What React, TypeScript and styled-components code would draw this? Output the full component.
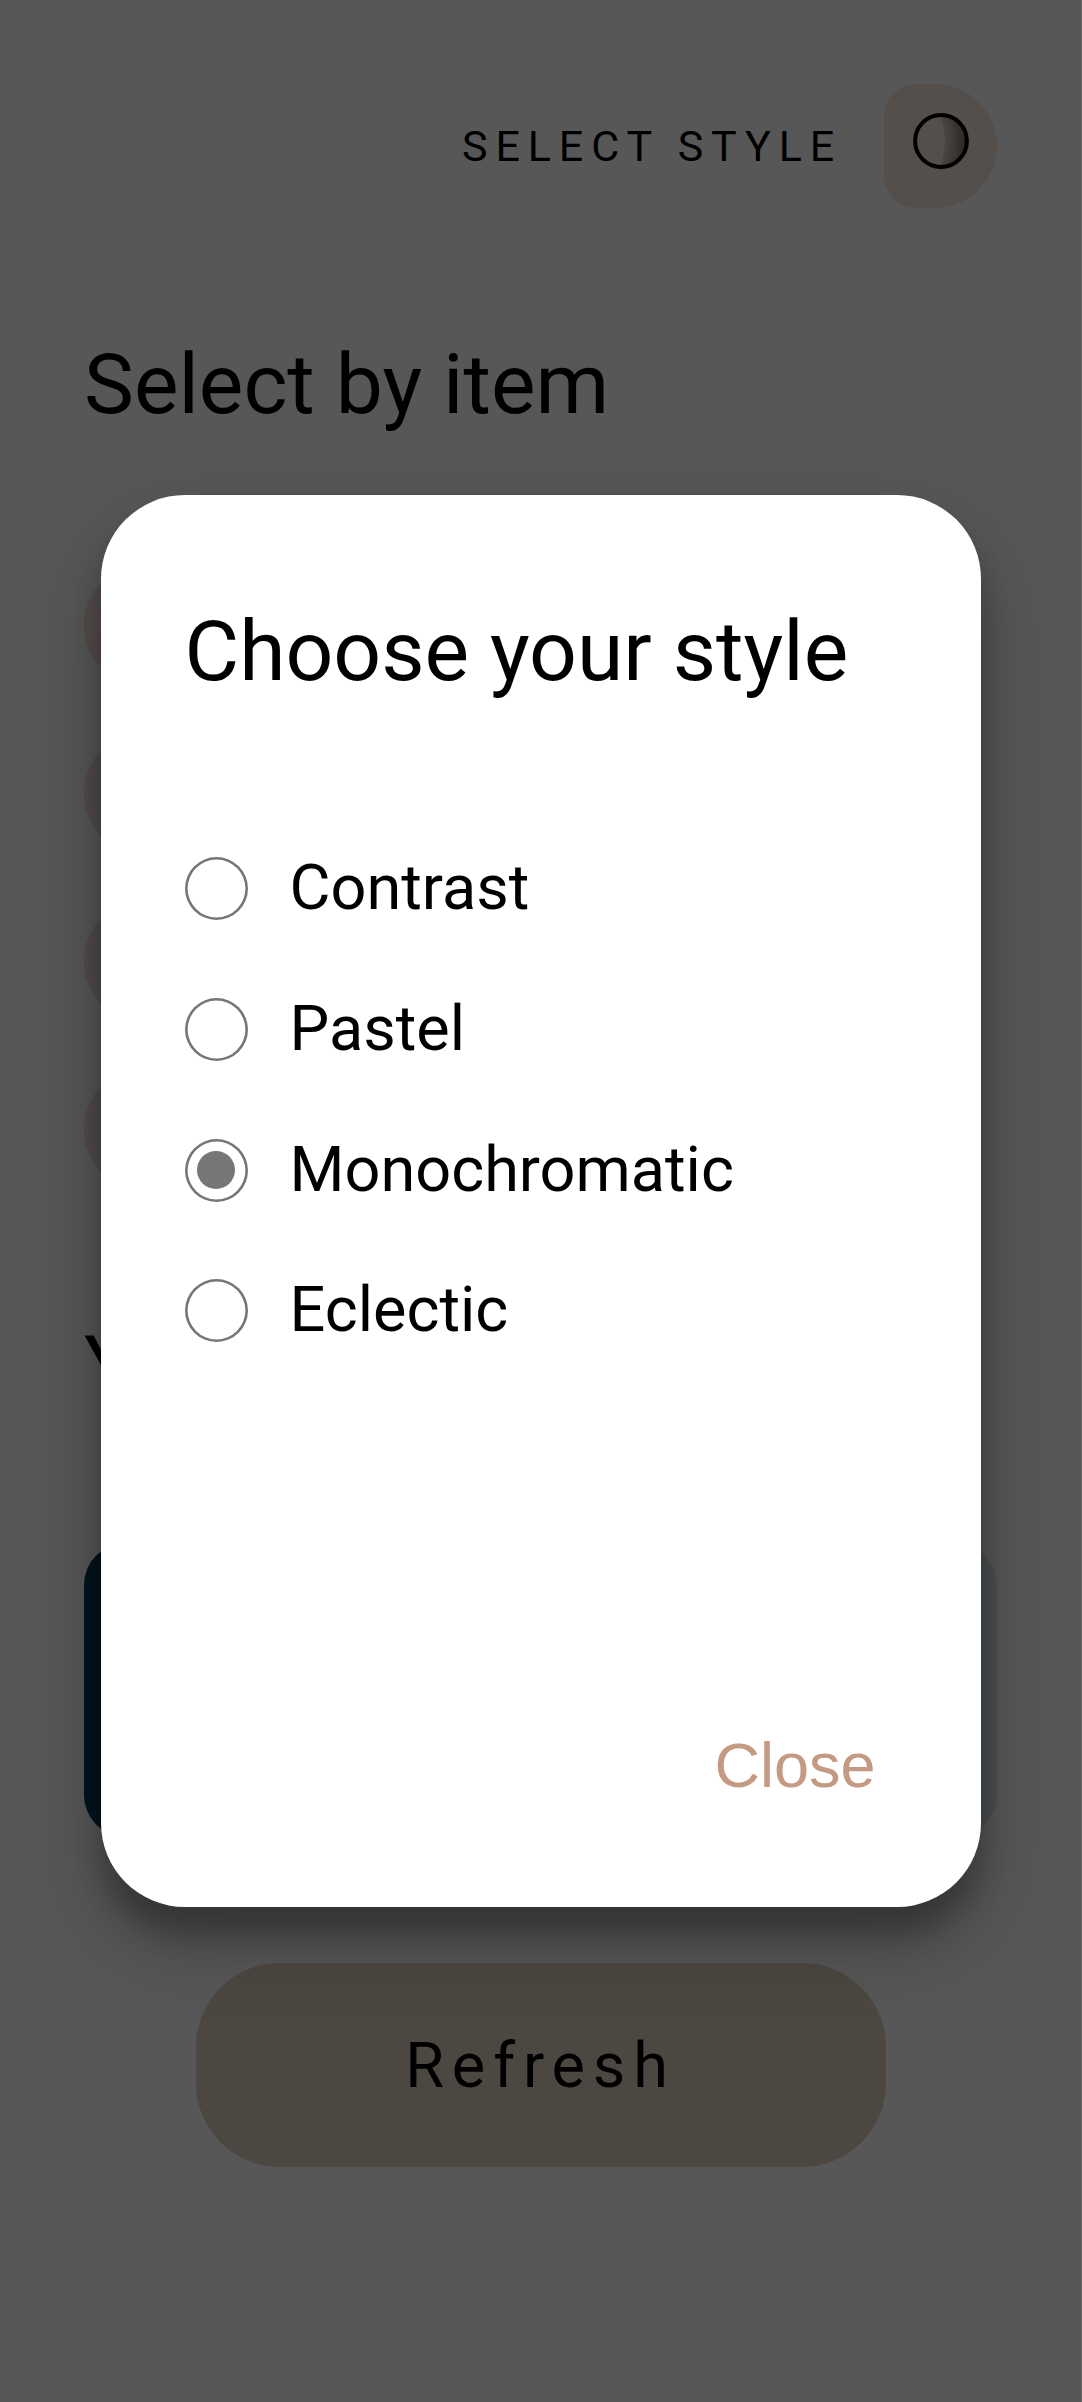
import React, { useState } from "react";
import styled, { createGlobalStyle } from "styled-components";

const GlobalStyle = createGlobalStyle`
  *, *::before, *::after { box-sizing: border-box; }
  html { background: #6b6b6b; }
  body { margin: 0; overflow: hidden; }
`;

const Screen = styled.div`
  position: relative;
  width: 1081px;
  height: 2402px;
  overflow: hidden;
  background: #575757;
  color: #000;
  font-family: Roboto, "Liberation Sans", sans-serif;
`;

const Page = styled.main`
  display: flex;
  flex-direction: column;
  padding: 83.7px 84px 0;
`;

const Header = styled.header`
  display: flex;
  justify-content: flex-end;
  align-items: center;
  gap: 42px;
  height: 124px;
`;

const HeaderLabel = styled.span`
  font-size: 43px;
  line-height: 50px;
  letter-spacing: 7.875px;
  padding-top: 1px;
`;

const StyleButton = styled.button`
  width: 113px;
  height: 124px;
  padding: 0 0 10px;
  border: 0;
  border-radius: 31.5px 62px 62px 31.5px;
  background: #544f4b;
  display: flex;
  align-items: center;
  justify-content: center;
`;

const Heading = styled.h1<{ $top: number }>`
  margin: ${(p) => p.$top}px 0 0;
  font-size: 84px;
  line-height: 100px;
  font-weight: 400;
`;

const ChipList = styled.div`
  display: flex;
  flex-direction: column;
  gap: 44px;
  margin-top: 128px;
`;

const Chip = styled.div<{ $color: string }>`
  width: 480px;
  height: 124px;
  border-radius: 62px;
  background: ${(p) => p.$color};
`;

const Palette = styled.div`
  display: flex;
  height: 294px;
  margin-top: 126px;
  border-radius: 42px;
  overflow: hidden;
`;

const Swatch = styled.div<{ $color: string }>`
  flex: 1;
  background: ${(p) => p.$color};
`;

const RefreshButton = styled.button`
  align-self: center;
  width: 690px;
  height: 203.5px;
  margin-top: 126px;
  padding: 2px 0 0;
  border: 0;
  border-radius: 84px;
  background: #4d4742;
  color: #000;
  font: 400 63px/74px Roboto, sans-serif;
  letter-spacing: 7.875px;
`;

const Overlay = styled.div`
  position: absolute;
  inset: 0;
  display: flex;
  align-items: center;
  justify-content: center;
`;

const Dialog = styled.section`
  display: flex;
  flex-direction: column;
  width: 880px;
  height: 1411.3px;
  padding: 107px 84px 105px;
  border-radius: 84px;
  background: #fff;
  box-shadow:
    0 36.75px 73.5px rgba(0, 0, 0, 0.25),
    0 26.25px 26.25px rgba(0, 0, 0, 0.22);
`;

const DialogTitle = styled.h2`
  margin: 0;
  font-size: 84px;
  line-height: 100px;
  font-weight: 400;
`;

const Options = styled.div`
  display: flex;
  flex-direction: column;
  gap: 77.75px;
  margin-top: 154.8px;
`;

const Option = styled.label`
  display: flex;
  align-items: center;
  gap: 42px;
  height: 63px;
  font-size: 63px;
  line-height: 61px;
`;

const OptionText = styled.span`
  margin-top: -2px;
`;

const Radio = styled.input`
  appearance: none;
  flex: none;
  display: grid;
  place-items: center;
  width: 63px;
  height: 63px;
  margin: 0;
  border-radius: 50%;
  box-shadow: inset 0 0 0 2.6px #767676;

  &:checked::before {
    content: "";
    width: 38px;
    height: 38px;
    border-radius: 50%;
    background: #767676;
  }
`;

const CloseButton = styled.button`
  align-self: flex-end;
  margin-top: auto;
  padding: 0 21px;
  border: 0;
  background: none;
  color: #c49a82;
  font: 400 63px/74px "Liberation Sans", Arial, sans-serif;
`;

function ToneIcon() {
  return (
    <svg width="56" height="56" viewBox="0 0 56 56">
      <defs>
        <radialGradient id="tone" gradientUnits="userSpaceOnUse" cx="-38" cy="28" r="91">
          <stop offset="0.76" stopColor="#222" stopOpacity="0" />
          <stop offset="0.77" stopColor="#222" stopOpacity="0.2" />
          <stop offset="1" stopColor="#222" stopOpacity="0.85" />
        </radialGradient>
      </defs>
      <circle cx="28" cy="28" r="25.9" fill="url(#tone)" stroke="#000" strokeWidth="4" />
    </svg>
  );
}

const chips = ["#544e4b", "#524c4b", "#524c4b", "#524c4b"];
const swatches = ["#00131e", "#12242e", "#22323a", "#343f45", "#4a4f52"];
const styles = ["Contrast", "Pastel", "Monochromatic", "Eclectic"];

export default function App() {
  const [selected, setSelected] = useState("Monochromatic");

  return (
    <>
      <GlobalStyle />
      <Screen>
        <Page>
          <Header>
            <HeaderLabel>SELECT STYLE</HeaderLabel>
            <StyleButton aria-label="Select style">
              <ToneIcon />
            </StyleButton>
          </Header>
          <Heading $top={127.5}>Select by item</Heading>
          <ChipList>
            {chips.map((color, i) => (
              <Chip key={i} $color={color} />
            ))}
          </ChipList>
          <Heading as="h2" $top={126}>
            Your
          </Heading>
          <Palette>
            {swatches.map((color) => (
              <Swatch key={color} $color={color} />
            ))}
          </Palette>
          <RefreshButton>Refresh</RefreshButton>
        </Page>
        <Overlay>
          <Dialog role="dialog" aria-label="Choose your style">
            <DialogTitle>Choose your style</DialogTitle>
            <Options>
              {styles.map((name) => (
                <Option key={name}>
                  <Radio
                    type="radio"
                    name="style"
                    checked={selected === name}
                    onChange={() => setSelected(name)}
                  />
                  <OptionText>{name}</OptionText>
                </Option>
              ))}
            </Options>
            <CloseButton>Close</CloseButton>
          </Dialog>
        </Overlay>
      </Screen>
    </>
  );
}
